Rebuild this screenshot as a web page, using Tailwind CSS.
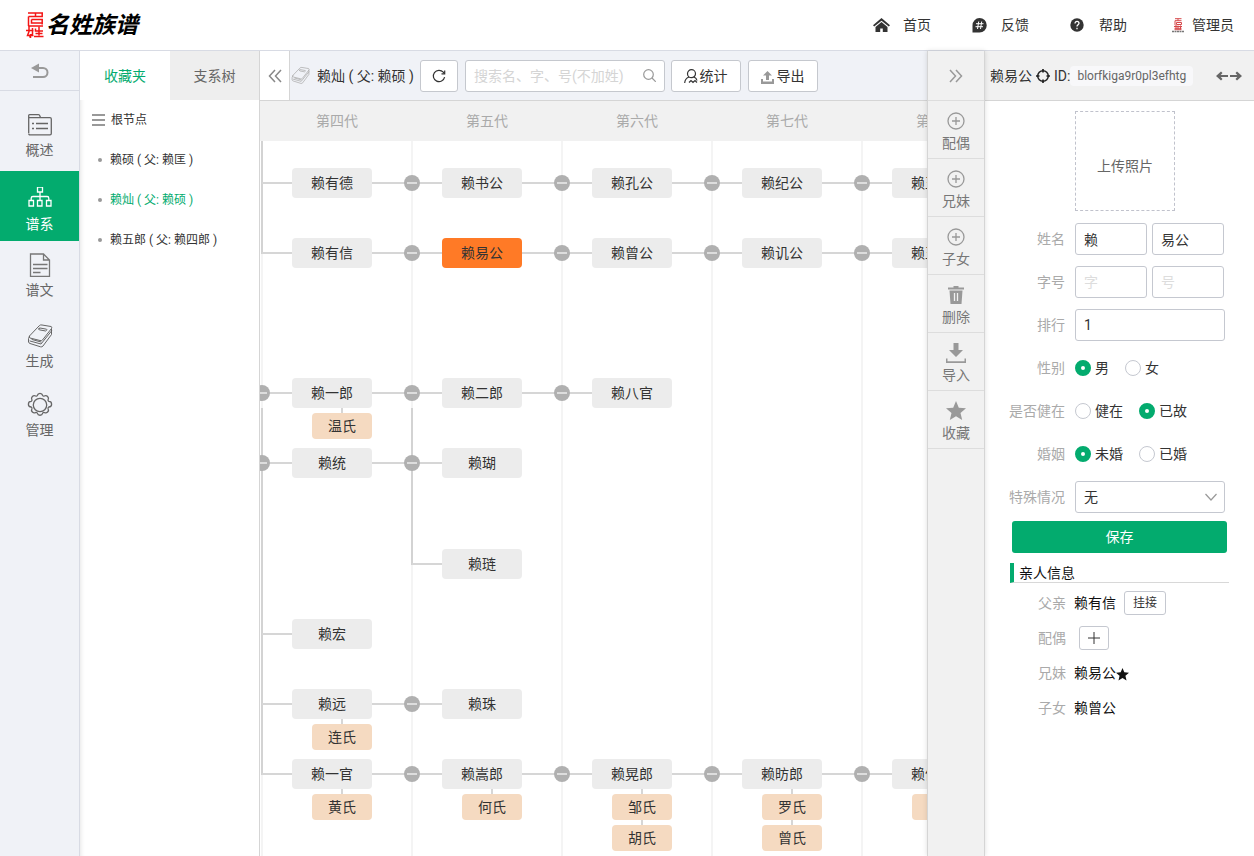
<!DOCTYPE html>
<html lang="zh-CN">
<head>
<meta charset="utf-8">
<meta name="viewport" content="width=device-width, initial-scale=1">
<title>名姓族谱</title>
<script src="https://cdn.jsdelivr.net/npm/@tailwindcss/browser@4"></script>
</head>
<body class="flex h-screen flex-col overflow-hidden bg-white font-[Roboto,'Noto_Sans_CJK_SC',sans-serif] text-sm text-[#333]">

<svg class="hidden" aria-hidden="true">
  <symbol id="book" viewBox="0 0 26 26">
    <g fill="none" stroke="currentColor" stroke-linejoin="round" stroke-linecap="round">
      <path d="M12.500 2.500Q13.500 1.500 15 2l9 1.500q1.500.5.5 2L15.500 17q-1 1-2.500.5L3 15q-1.500-.7-.5-2Z"/>
      <path d="M2.500 13Q1 15.500 1.500 19q.3 1 1.500 1.500l10.500 3.300q1.500.4 2.500-.8L24.500 11.500V6"/>
      <path d="M3 18l11 3 10.500-13M5 16.500 14 19"/>
      <path d="M12 5.500 13 5l6.500 1.200q.7.300.2 1l-1 .8-6.500-1.200q-.9-.4-.2-1.300Z"/>
    </g>
  </symbol>
  <symbol id="plus-circle" viewBox="0 0 18 18">
    <g fill="none" stroke="currentColor" stroke-width="1.300"><circle cx="9" cy="9" r="8"/><path d="M9 5v8M5 9h8"/></g>
  </symbol>
  <symbol id="star" viewBox="0 0 20 20">
    <path fill="currentColor" d="m10 0 2.800 6.700 7.200.6-5.500 4.700 1.700 7.100L10 15.300l-6.200 3.800L5.500 12 0 7.300l7.200-.6Z"/>
  </symbol>
</svg>

<header class="flex h-[51px] shrink-0 items-center justify-between border-b border-[#d8dbe4] pr-5 pl-[26px]">
  <h1 class="flex items-center gap-0.5 text-black">
    <svg class="h-[26px] w-[18px]" viewBox="0 0 18 26" fill="none" stroke="#f31515" stroke-width="1.500">
      <path d="M2 1h15M9.500 1v4M2.500 4.500h13.700V1M2.500 4.500v9.500M5.500 7.500h10.700v5M5.500 7.500v3.500h10.500M2.500 14h14.500"/>
      <path d="M0 18.500h7.500M3 14v5.500l-1.500 4h6M6.500 16v6L3.500 25.500M9.500 16.500V19h7.500M13 14.500v9M9.500 21.500h7M8 24.500h9.500M4.500 22v4"/>
    </svg>
    <span class="text-[23px] leading-none font-bold italic">名姓族谱</span>
  </h1>
  <nav class="flex items-center gap-[41px]">
    <a href="#" class="flex items-center gap-[13px]">
      <svg class="h-[15px] w-[17px]" viewBox="0 0 17 15" fill="#333"><path d="M8.500 0 17 7.200 15.800 8.600 8.500 2.700 1.200 8.600 0 7.200Z"/><path d="M8.500 4 14.500 9v5h-4.700V10.500H7.200V14H2.500V9Z"/></svg>首页</a>
    <a href="#" class="flex items-center gap-[14px]">
      <svg class="size-[15px]" viewBox="0 0 15 15"><path fill="#333" d="M7.500 0a7.200 7.200 0 1 1 0 14.500H.5V7.200A7.200 7.200 0 0 1 7.500 0Z"/><path stroke="#fff" d="M6.700 3.500 5.500 11M9.700 3.500 8.500 11M4 5.700h7.500M3.500 8.700H11" fill="none"/></svg>反馈</a>
    <a href="#" class="mr-1 flex items-center gap-[15px]">
      <svg class="size-[14px]" viewBox="0 0 14 14"><circle cx="7" cy="7" r="6.700" fill="#333"/><path d="M5 5.500C5 2.500 9 2.800 9 5.200 9 6.800 7 6.700 7 8.500M7 9.700v1.500" fill="none" stroke="#fff" stroke-width="1.300"/></svg>帮助</a>
    <a href="#" class="flex items-center gap-2">
      <svg class="h-[15px] w-3" viewBox="0 0 12 15"><path d="M3 .7h6.500M6 .7v2M3 2.700h6.500M3 2.700v4.500M4.500 4.500h5v2h-5ZM2 8.500h8M4 7v4M6 7.500v4M8.500 7.500v4M2.500 10.300h7M2.500 11.700h7" fill="none" stroke="#d6484b"/><path d="M0 13.500h12" stroke="#777" stroke-width="1.500" stroke-dasharray="2 .5"/></svg>管理员</a>
  </nav>
</header>

<div class="flex min-h-0 flex-1">

  <nav class="w-20 shrink-0 border-r border-[#d8dbe4] bg-[#f0f2f7] text-[#666]">
    <button class="mb-2.5 flex h-10 w-full items-center justify-center border-b border-[#d8dbe4]" aria-label="返回">
      <svg class="h-4 w-[18px]" viewBox="0 0 18 16"><path d="M0 5 8 .5v9Z" fill="#999"/><path d="M6 5h6a4.500 4.500 0 0 1 0 9H2" fill="none" stroke="#999" stroke-width="2"/></svg>
    </button>
    <a href="#" class="flex h-[70px] flex-col items-center gap-[3px] pt-3">
      <svg class="h-6 w-[26px]" viewBox="0 0 26 24" fill="none" stroke="#666" stroke-width="1.300"><path d="M1.700 20V2.500Q1.700 1.700 2.500 1.700h9q1 0 1.500 1.500l.5 1.500H23q1.300 0 1.300 1.300v14.500q0 1.300-1.300 1.300H3q-1.300 0-1.300-1.300M1.700 4.700h12"/><path d="M5 10.500h2M5 15.500h2M9 10.500h12M9 15.500h12" stroke-width="1.500"/></svg>概述</a>
    <a href="#" aria-current="page" class="flex h-[70px] flex-col items-center gap-[3px] bg-[#03ab6e] pt-4 text-white">
      <svg class="h-6 w-[26px]" viewBox="0 0 26 24" fill="none" stroke="#fff" stroke-width="1.300"><path d="M10.500 0h5v5h-5ZM2 13.500h4.500V19H2ZM10.500 13.500H15V19h-4.500ZM19.500 13.500H24V19h-4.500ZM13 5v8.500M4.200 13.500v-2.300q0-1.700 1.700-1.700h14.200q1.700 0 1.700 1.700v2.300"/></svg>谱系</a>
    <a href="#" class="flex h-[70px] flex-col items-center gap-[3px] pt-3">
      <svg class="h-6 w-[26px]" viewBox="0 0 26 24" fill="none" stroke="#777" stroke-width="1.300"><path d="M3.500 1h13l6 6v16.300h-19ZM16.500 1v6h6M6 11.500h14.500M6 15.500h14.500M6 19.500h7.500"/></svg>谱文</a>
    <a href="#" class="flex h-[70px] flex-col items-center gap-0.5 pt-3">
      <svg class="size-[26px]"><use href="#book"/></svg>生成</a>
    <a href="#" class="flex h-[70px] flex-col items-center gap-[3px] pt-3">
      <svg class="h-6 w-[26px] overflow-visible" viewBox="0 0 26 24" fill="none" stroke="#666" stroke-width="1.300"><circle cx="13" cy="12" r="6.700"/><path d="M10.300 2.500a2.800 2.800 0 0 1 5.400 0q.5 1 1.600.5a2.800 2.800 0 0 1 3.800 3.800q-.4 1 .7 1.600a2.800 2.800 0 0 1 0 5.600q-1 .6-.7 1.700a2.800 2.800 0 0 1-3.800 3.800q-1.100-.4-1.600.7a2.800 2.800 0 0 1-5.400 0q-.5-1-1.600-.7a2.800 2.800 0 0 1-3.800-3.800q.3-1.100-.7-1.700a2.800 2.800 0 0 1 0-5.600q1.100-.6.7-1.600a2.800 2.800 0 0 1 3.800-3.800q1.100.4 1.600-.5Z"/></svg>管理</a>
  </nav>

  <aside class="w-[180px] shrink-0 border-r border-[#d5d5d5] shadow-[inset_4px_0_4px_-3px_#0000001a]">
    <div class="flex h-[49px]" role="tablist">
      <button role="tab" aria-selected="true" class="w-[90px] bg-white text-[#03ab6e]">收藏夹</button>
      <button role="tab" aria-selected="false" class="flex-1 bg-[#eee] text-[#666]">支系树</button>
    </div>
    <h2 class="flex h-10 items-center gap-1.5 pl-3 text-xs"><svg class="h-3 w-[13px]" viewBox="0 0 13 12"><path d="M0 1h13M0 6h13M0 11h13" stroke="#999" stroke-width="2"/></svg>根节点</h2>
    <ul class="text-xs">
      <li class="flex h-10 items-center gap-2 pl-[18px]"><i class="size-1 rounded-full bg-[#999]"></i><a href="#">赖硕 ( 父: 赖匡 )</a></li>
      <li class="flex h-10 items-center gap-2 pl-[18px]"><i class="size-1 rounded-full bg-[#999]"></i><a href="#" class="text-[#03ab6e]">赖灿 ( 父: 赖硕 )</a></li>
      <li class="flex h-10 items-center gap-2 pl-[18px]"><i class="size-1 rounded-full bg-[#999]"></i><a href="#">赖五郎 ( 父: 赖四郎 )</a></li>
    </ul>
  </aside>

  <main class="flex min-w-0 flex-1 flex-col overflow-hidden">
    <div class="flex h-[50px] shrink-0 items-center border-b border-[#d5d5d5] bg-[#f0f2f7]">
      <button class="flex h-full w-[30px] shrink-0 items-center justify-center border-r border-[#d5d5d5] bg-white" aria-label="收起">
        <svg class="size-3.5" viewBox="0 0 14 14" fill="none" stroke="#888" stroke-width="1.500"><path d="M7 1 1.500 7 7 13M13 1 7.500 7 13 13"/></svg>
      </button>
      <svg class="ml-px size-[19px] shrink-0 text-[#aaa]"><use href="#book"/></svg>
      <span class="ml-[7px] shrink-0 whitespace-nowrap">赖灿 ( 父: 赖硕 )</span>
      <button class="ml-1.5 flex h-8 w-[38px] shrink-0 items-center justify-center rounded-[3px] border border-[#c5c8ce] bg-white" aria-label="刷新">
        <svg class="size-3.5" viewBox="0 0 14 14" fill="none" stroke="#333" stroke-width="1.200"><path d="M12.600 8.200A5.700 5.700 0 1 1 11.300 3.200L12.500 4.500"/><path d="M12.700 1.500v3.300H9.500"/></svg>
      </button>
      <label class="ml-[7px] flex h-8 w-[200px] shrink-0 items-center rounded-[3px] border border-[#c5c8ce] bg-white px-2">
        <input type="text" aria-label="搜索" placeholder="搜索名、字、号(不加姓)" class="min-w-0 flex-1 outline-none placeholder:text-[#d5d5d5]">
        <svg class="size-[13px]" viewBox="0 0 13 13" fill="none" stroke="#999" stroke-width="1.200"><circle cx="5.500" cy="5.500" r="4.800"/><path d="m9 9 3.800 3.800"/></svg>
      </label>
      <button class="ml-1.5 flex h-8 w-[70px] shrink-0 items-center justify-center gap-px rounded-[3px] border border-[#c5c8ce] bg-white">
        <svg class="mt-0.5 h-[15px] w-3.5" viewBox="0 0 14 15" fill="none" stroke="#333" stroke-width="1.200"><circle cx="7.500" cy="4.700" r="4"/><path d="M5 8Q1 9.500.7 14M10 8q2.500 1 3 3.500M5 13.500l2-2 2 2 2-2 2 2"/></svg>统计</button>
      <button class="ml-[7px] flex h-8 w-[70px] shrink-0 items-center justify-center gap-0.5 rounded-[3px] border border-[#c5c8ce] bg-white">
        <svg class="mt-1 size-[13px]" viewBox="0 0 13 13" fill="#999"><path d="M6.500 0 11 4.500H8V9H5V4.500H2ZM0 8h2v2.500h9V8h2v5H0Z"/></svg>导出</button>
    </div>
    <div class="flex h-10 shrink-0 items-center overflow-hidden bg-[#f1f1f1] pl-0.5 text-[#aaa]">
      <span class="w-[150px] shrink-0 text-center">第四代</span>
      <span class="w-[150px] shrink-0 text-center">第五代</span>
      <span class="w-[150px] shrink-0 text-center">第六代</span>
      <span class="w-[150px] shrink-0 text-center">第七代</span>
      <span class="w-[150px] shrink-0 text-center">第八代</span>
    </div>
    <div id="tree" class="relative flex-1 overflow-hidden"></div>
  </main>

  <div class="z-10 w-[58px] shrink-0 border-x border-[#d5d5d5] bg-[#f1f1f1] text-[#777] shadow-[0_0_5px_#00000022]">
    <button class="flex h-[50px] w-full items-center justify-center border-b border-[#ddd]" aria-label="收起面板">
      <svg class="size-3.5" viewBox="0 0 14 14" fill="none" stroke="#999" stroke-width="1.500"><path d="M1 1 6.500 7 1 13M7 1l5.500 6L7 13"/></svg>
    </button>
    <button class="flex h-[58px] w-full flex-col items-center gap-[3px] border-b border-[#ddd] pt-[11px]"><svg class="size-[18px] shrink-0 text-[#999]"><use href="#plus-circle"/></svg>配偶</button>
    <button class="flex h-[58px] w-full flex-col items-center gap-[3px] border-b border-[#ddd] pt-[11px]"><svg class="size-[18px] shrink-0 text-[#999]"><use href="#plus-circle"/></svg>兄妹</button>
    <button class="flex h-[58px] w-full flex-col items-center gap-[3px] border-b border-[#ddd] pt-[11px]"><svg class="size-[18px] shrink-0 text-[#999]"><use href="#plus-circle"/></svg>子女</button>
    <button class="flex h-[58px] w-full flex-col items-center gap-[3px] border-b border-[#ddd] pt-[11px]"><svg class="h-[18px] w-4 shrink-0" viewBox="0 0 16 18"><path fill="#999" d="M0 1.500h5.500V0h5v1.500H16v2H0ZM1.500 4.500h13L13.500 18h-11Z"/><path d="M6.500 7v8M9.500 7v8" stroke="#f1f1f1" stroke-width="1.300"/></svg>删除</button>
    <button class="flex h-[58px] w-full flex-col items-center gap-0.5 border-b border-[#ddd] pt-2.5"><svg class="size-5 shrink-0" viewBox="0 0 20 20" fill="#999"><path d="M7.500 0h5v7H17l-7 7-7-7h4.500ZM0 15.500h1.500v2.700h17v-2.700H20V20H0Z"/></svg>导入</button>
    <button class="flex h-[58px] w-full flex-col items-center gap-0.5 border-b border-[#ddd] pt-2.5"><svg class="size-5 shrink-0 text-[#999]"><use href="#star"/></svg>收藏</button>
  </div>

  <section class="w-[269px] shrink-0 overflow-hidden">
    <div class="flex h-[50px] items-center border-b border-[#d5d5d5] bg-[#f1f1f1] pr-3 pl-[5px] whitespace-nowrap">
      <span>赖易公</span>
      <svg class="mx-1 size-3.5" viewBox="0 0 14 14" fill="none" stroke="#222"><circle cx="7" cy="7" r="5.300" stroke-width="1.500"/><path d="M7 0v3.500M7 10.500V14M0 7h3.500M10.500 7H14" stroke-width="1.700"/></svg>
      <span>ID:</span>
      <span class="rounded-sm bg-[#f8f8fa] px-[7px] text-xs leading-5 text-[#666]">blorfkiga9r0pl3efhtg</span>
      <button class="ml-auto" aria-label="调整宽度"><svg class="h-2.5 w-[26px]" viewBox="0 0 26 10" fill="#666"><path d="M0 5 5 .5 6.500 2 4.700 4H12v2H4.700L6.500 8 5 9.500ZM26 5 21 .5 19.500 2l1.800 2H14v2h7.300L19.500 8 21 9.500Z"/></svg></button>
    </div>

    <form class="flex flex-col pt-2.5 pr-[25px] pl-5" onsubmit="return false">
      <button type="button" class="ml-[70px] size-[100px] border border-dashed border-[#c0c2cc] pt-2.5 text-[#666]">上传照片</button>
      <div class="mt-3 flex flex-col gap-[11px]">
        <div class="flex h-8 items-center gap-2.5"><label for="surname" class="w-[60px] text-right text-[#aaa]">姓名</label>
          <div class="flex gap-[5px]"><input id="surname" value="赖" class="h-8 w-[72px] rounded-[3px] border border-[#c5c8d0] px-2"><input aria-label="名" value="易公" class="h-8 w-[72px] rounded-[3px] border border-[#c5c8d0] px-2"></div></div>
        <div class="flex h-8 items-center gap-2.5"><label for="zi" class="w-[60px] text-right text-[#aaa]">字号</label>
          <div class="flex gap-[5px]"><input id="zi" placeholder="字" class="h-8 w-[72px] rounded-[3px] border border-[#c5c8d0] px-2 placeholder:text-[#ddd]"><input aria-label="号" placeholder="号" class="h-8 w-[72px] rounded-[3px] border border-[#c5c8d0] px-2 placeholder:text-[#ddd]"></div></div>
        <div class="flex h-8 items-center gap-2.5"><label for="rank" class="w-[60px] text-right text-[#aaa]">排行</label>
          <input id="rank" value="1" class="h-8 w-[150px] rounded-[3px] border border-[#c5c8d0] px-2"></div>
        <div class="flex h-8 items-center gap-2.5" role="group" aria-label="性别"><span class="w-[60px] text-right text-[#aaa]">性别</span>
          <div class="flex gap-4">
            <label class="flex items-center gap-1"><input type="radio" name="sex" checked class="size-4 appearance-none rounded-full border border-[#c5c8d0] bg-white checked:border-[6px] checked:border-[#03ab6e]">男</label>
            <label class="flex items-center gap-1"><input type="radio" name="sex" class="size-4 appearance-none rounded-full border border-[#c5c8d0] bg-white checked:border-[6px] checked:border-[#03ab6e]">女</label></div></div>
        <div class="flex h-8 items-center gap-2.5" role="group" aria-label="是否健在"><span class="w-[60px] text-right text-[#aaa]">是否健在</span>
          <div class="flex gap-4">
            <label class="flex items-center gap-1"><input type="radio" name="alive" class="size-4 appearance-none rounded-full border border-[#c5c8d0] bg-white checked:border-[6px] checked:border-[#03ab6e]">健在</label>
            <label class="flex items-center gap-1"><input type="radio" name="alive" checked class="size-4 appearance-none rounded-full border border-[#c5c8d0] bg-white checked:border-[6px] checked:border-[#03ab6e]">已故</label></div></div>
        <div class="flex h-8 items-center gap-2.5" role="group" aria-label="婚姻"><span class="w-[60px] text-right text-[#aaa]">婚姻</span>
          <div class="flex gap-4">
            <label class="flex items-center gap-1"><input type="radio" name="married" checked class="size-4 appearance-none rounded-full border border-[#c5c8d0] bg-white checked:border-[6px] checked:border-[#03ab6e]">未婚</label>
            <label class="flex items-center gap-1"><input type="radio" name="married" class="size-4 appearance-none rounded-full border border-[#c5c8d0] bg-white checked:border-[6px] checked:border-[#03ab6e]">已婚</label></div></div>
        <div class="flex h-8 items-center gap-2.5"><label for="special" class="w-[60px] text-right text-[#aaa]">特殊情况</label>
          <div class="relative"><select id="special" class="h-8 w-[150px] appearance-none rounded-[3px] border border-[#c5c8d0] bg-white px-2"><option>无</option></select>
            <svg class="pointer-events-none absolute top-3 right-2 h-2 w-3" viewBox="0 0 12 8" fill="none" stroke="#999" stroke-width="1.200"><path d="m.5 1 5.500 6 5.500-6"/></svg></div></div>
      </div>
      <button class="mt-2 mr-0.5 ml-[7px] h-8 rounded-[3px] bg-[#03ab6e] text-white">保存</button>
    </form>

    <div class="mt-2.5 px-[25px]">
      <h3 class="flex h-5 items-center border-b border-l-4 border-b-[#d8d8d8] border-l-[#03ab6e] pl-[5px] text-[#111]">亲人信息</h3>
      <dl class="mt-0.5 grid grid-cols-[56px_1fr] gap-x-2 text-[#111]">
        <dt class="flex h-[35px] items-center justify-end text-[#aaa]">父亲</dt>
        <dd class="flex h-[35px] items-center gap-2"><a href="#">赖有信</a><button class="h-6 w-[42px] rounded-[3px] border border-[#c5c8d0] text-xs text-[#333]">挂接</button></dd>
        <dt class="flex h-[35px] items-center justify-end text-[#aaa]">配偶</dt>
        <dd class="flex h-[35px] items-center pl-[5px]"><button class="flex h-6 w-[30px] items-center justify-center rounded-[3px] border border-[#c5c8d0]" aria-label="添加配偶"><svg class="size-3" viewBox="0 0 12 12" stroke="#333"><path d="M6 0v12M0 6h12"/></svg></button></dd>
        <dt class="flex h-[35px] items-center justify-end text-[#aaa]">兄妹</dt>
        <dd class="flex h-[35px] items-center"><a href="#">赖易公</a><svg class="mt-1 size-[13px]"><use href="#star"/></svg></dd>
        <dt class="flex h-[35px] items-center justify-end text-[#aaa]">子女</dt>
        <dd class="flex h-[35px] items-center"><a href="#">赖曾公</a></dd>
      </dl>
    </div>
  </section>
</div>

<script>
// Each person: generation column, vertical centre, name, spouses.
const people = [
  [0, 42, '赖有德'], [1, 42, '赖书公'], [2, 42, '赖孔公'], [3, 42, '赖纪公'], [4, 42, '赖玉公'],
  [0, 112, '赖有信'], [1, 112, '赖易公'], [2, 112, '赖曾公'], [3, 112, '赖讥公'], [4, 112, '赖玉公'],
  [0, 252, '赖一郎', '温氏'], [1, 252, '赖二郎'], [2, 252, '赖八官'],
  [0, 322, '赖统'], [1, 322, '赖瑚'], [1, 423, '赖琏'],
  [0, 493, '赖宏'], [0, 563, '赖远', '连氏'], [1, 563, '赖珠'],
  [0, 633, '赖一官', '黄氏'], [1, 633, '赖嵩郎', '何氏'], [2, 633, '赖晃郎', '邹氏', '胡氏'],
  [3, 633, '赖昉郎', '罗氏', '曾氏'], [4, 633, '赖仲郎', '李氏'],
];
const selected = '赖易公';
// Collapse toggles: column boundary, vertical centre.
const toggles = [[0, 252], [0, 322], [1, 252], [1, 322], [1, 563], [2, 252]];
for (const y of [42, 112, 633]) for (let c = 1; c <= 4; c++) toggles.push([c, y]);

const tree = document.getElementById('tree');
function put(tag, cls, x, y, w, h, text) {
  const el = document.createElement(tag);
  el.className = cls;
  el.style.cssText = `left:${x}px;top:${y}px;width:${w}px;height:${h}px`;
  if (text) el.textContent = text;
  tree.append(el);
  return el;
}
for (let c = 0; c < 5; c++) {
  const guide = put('i', 'absolute bg-[#f4f4f4]', 1 + 150 * c, 0, 2, 0);
  guide.style.height = '100%';
}
for (const [c, y, h] of [[0, 0, 113], [0, 267, 367], [1, 267, 157]]) put('i', 'absolute bg-[#d3d3d3]', 1 + 150 * c, y, 2, h);
for (const [c, y] of people) put('i', 'absolute bg-[#d6d6d6]', 2 + 150 * c, y - 1, 30, 2);
for (const [c, y] of toggles) {
  if (c) put('i', 'absolute bg-[#d6d6d6]', 150 * c - 38, y - 1, 40, 2);
  const b = put('button', 'absolute flex items-center justify-center rounded-full bg-[#b0b0b0]', 150 * c - 6, y - 8, 16, 16);
  b.setAttribute('aria-label', '收起分支');
  const bar = document.createElement('i');
  bar.className = 'h-0.5 w-2.5 bg-[#ddd]';
  b.append(bar);
}
for (const [c, y, name, ...spouses] of people) {
  const x = 32 + 150 * c;
  put('button', name === selected ? 'absolute rounded bg-[#ff7a26]' : 'absolute rounded bg-[#ececec]', x, y - 15, 80, 30, name);
  spouses.forEach((s, i) => {
    put('i', 'absolute bg-[#d6d6d6]', x + 49, y + 15 + 31 * i, 2, 5);
    put('button', 'absolute rounded bg-[#f5dac1]', x + 20, y + 20 + 31 * i, 60, 26, s);
  });
}
</script>
</body>
</html>
